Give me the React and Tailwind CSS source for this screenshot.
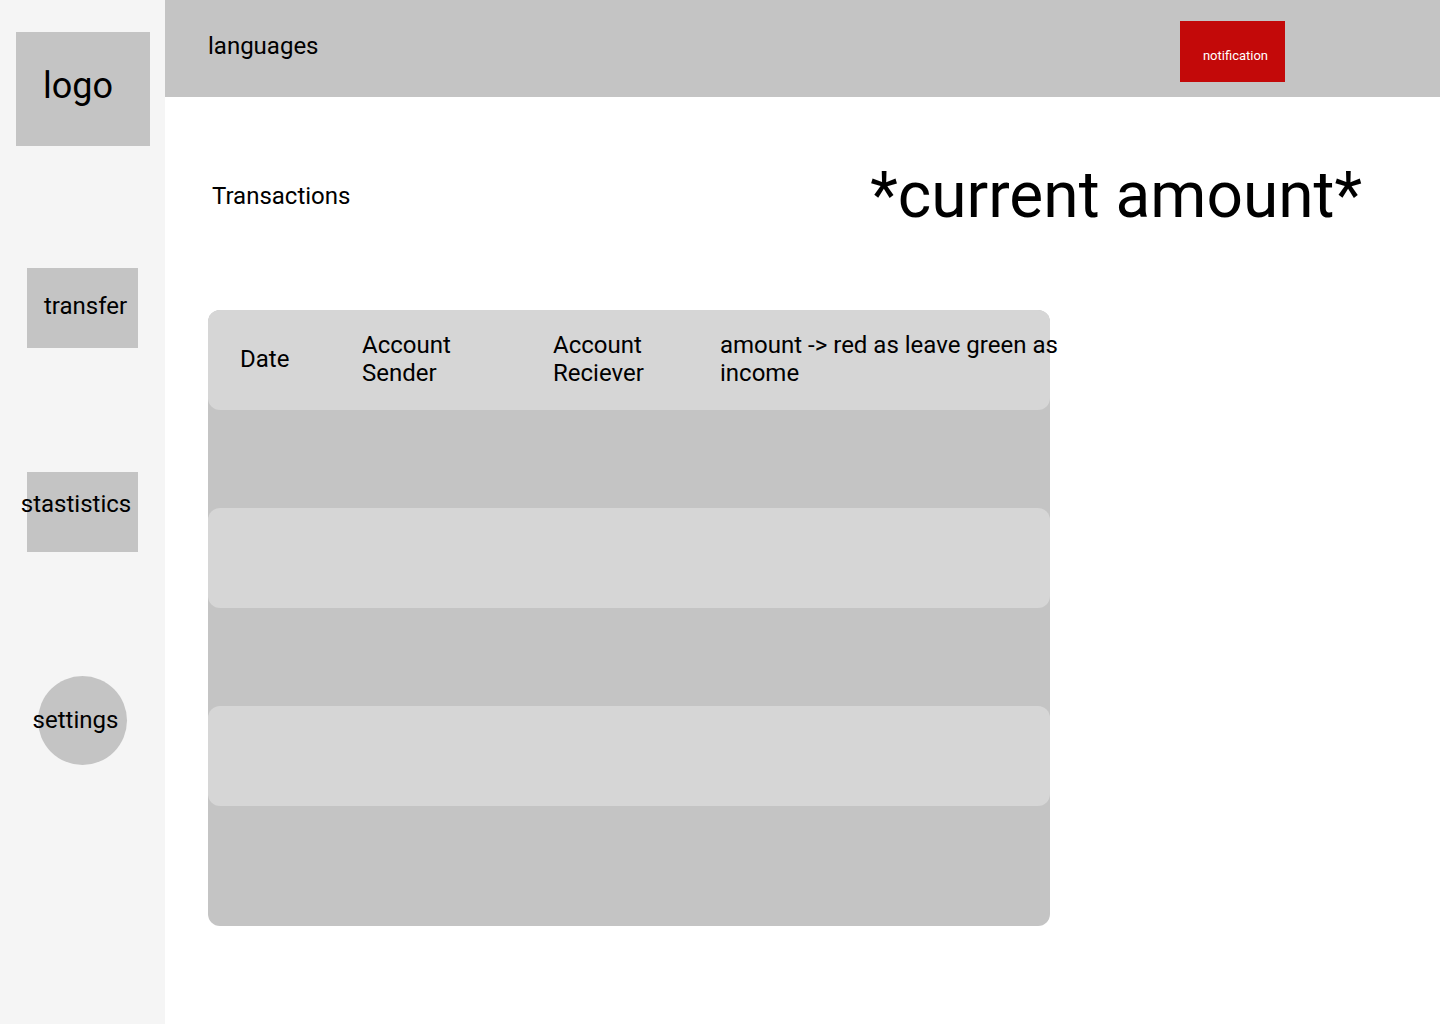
export default function App() {
  const rows = ["light", "dark", "light", "dark", "light", "dark"];
  return (
    <div className="flex w-[1440px] h-[1024px] bg-white text-black font-['Roboto',sans-serif] overflow-hidden">
      <aside className="w-[165px] shrink-0 bg-[#f5f5f5] flex flex-col">
        <div className="mt-[32px] ml-[16px] w-[134px] h-[114px] bg-[#c4c4c4] flex items-center justify-center pr-[10px] pb-[6px] text-[36px]">
          logo
        </div>
        <div className="mt-[122px] ml-[27px] w-[111px] h-[80px] bg-[#c4c4c4] flex items-center pl-[17px] pb-[4px] text-[24px] whitespace-nowrap">
          transfer
        </div>
        <div className="mt-[124px] ml-[27px] w-[111px] h-[80px] bg-[#c4c4c4] flex items-center justify-center pr-[13px] pb-[16px] text-[24px] whitespace-nowrap">
          stastistics
        </div>
        <div className="mt-[124px] ml-[38px] w-[89px] h-[89px] rounded-full bg-[#c4c4c4] flex items-center justify-center pr-[14px] pb-[2px] text-[24px] whitespace-nowrap">
          settings
        </div>
      </aside>

      <main className="flex-1 flex flex-col">
        <header className="h-[97px] bg-[#c4c4c4] flex items-start justify-between pl-[43px] pr-[155px]">
          <span className="mt-[28px] text-[24px]">languages</span>
          <button className="mt-[21px] w-[105px] h-[61px] bg-[#c30909] text-white text-[13px] flex items-center justify-center pt-[8px] pl-[6px]">
            notification
          </button>
        </header>

        <div className="flex items-center justify-between pl-[47px] pr-[78px] mt-[62px] h-[74px]">
          <span className="text-[24px]">Transactions</span>
          <span className="text-[64px] leading-none">*current amount*</span>
        </div>

        <div className="ml-[43px] mt-[77px] w-[842px] h-[616px] bg-[#c4c4c4] rounded-[12px] flex flex-col">
          <div className="h-[100px] shrink-0 bg-[#d6d6d6] rounded-[12px] flex items-center pb-[2px] text-[24px] leading-[28px] whitespace-nowrap">
            <div className="w-[154px] pl-[32px]">Date</div>
            <div className="w-[191px]">
              Account
              <br />
              Sender
            </div>
            <div className="w-[167px]">
              Account
              <br />
              Reciever
            </div>
            <div className="w-[330px]">
              amount -&gt; red as leave green as
              <br />
              income
            </div>
          </div>
          {rows.slice(1).map((r, i) => (
            <div
              key={i}
              className={
                r === "light"
                  ? "h-[100px] shrink-0 bg-[#d6d6d6] rounded-[12px]"
                  : i === 4
                  ? "flex-1"
                  : "h-[98px] shrink-0"
              }
            />
          ))}
        </div>
      </main>
    </div>
  );
}
